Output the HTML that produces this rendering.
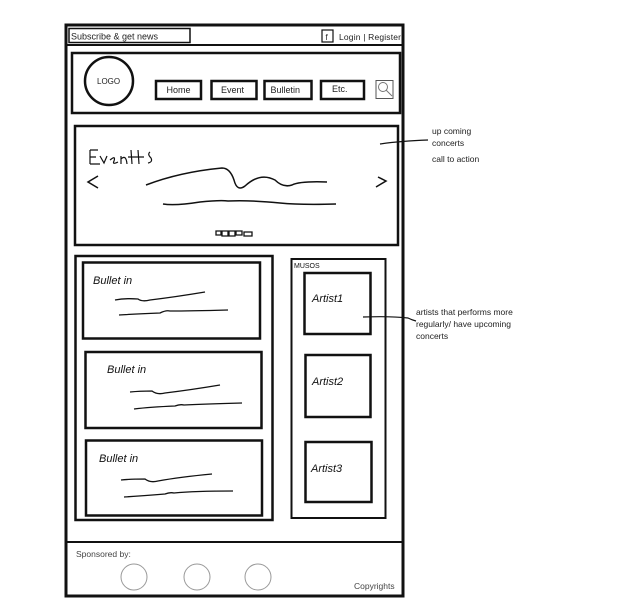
<!DOCTYPE html>
<html><head><style>
html,body{margin:0;padding:0;background:#fff;}
svg{display:block}
text{font-family:"Liberation Sans",sans-serif;}
</style></head><body>
<svg width="634" height="600" viewBox="0 0 634 600" xmlns="http://www.w3.org/2000/svg">
<g fill="none" stroke="#111">
<rect x="66" y="25" width="337" height="571" stroke-width="3"/>
<line x1="66" y1="45" x2="403" y2="45" stroke-width="2"/>
<rect x="69" y="28.5" width="121" height="14" stroke-width="1.5"/>
<rect x="322" y="30" width="11" height="12" stroke-width="1.2"/>
<rect x="72" y="53" width="328" height="60" stroke-width="2.5"/>
<circle cx="109" cy="81" r="24" stroke-width="2.5"/>
<rect x="156" y="81" width="45" height="18" stroke-width="2.5"/>
<rect x="211.5" y="81" width="45" height="18" stroke-width="2.5"/>
<rect x="264.5" y="81" width="47" height="18" stroke-width="2.5"/>
<rect x="321" y="81" width="43" height="18" stroke-width="2.5"/>
<rect x="376" y="80.5" width="17" height="18" stroke="#555" stroke-width="1"/>
<circle cx="383" cy="87" r="4.5" stroke="#777" stroke-width="1"/>
<line x1="386" y1="90" x2="392" y2="96" stroke="#777" stroke-width="1"/>
<rect x="75" y="126" width="323" height="119" stroke-width="2.5"/>
<path d="M90 150 V164 M90 150 H98 M90 157 H96 M90 164 H100 M100 156 L104 163 L107 156 M110 160 Q116 155 114 161 Q112 165 118 162 M121 156 V164 M121 159 Q126 154 127 164 M131 150 L132 164 M128 157 H136 M138 150 L139 164 M136 157 H144 M150 152 Q147 154 151 158 Q153 162 148 163" stroke-width="1.2"/>
<path d="M98 176 L88 182 L98 188 M378 177 L386 181 L376 187" stroke-width="1.5"/>
<path d="M146 185 Q180 172 222 168 Q230 168 234 180 Q237 192 245 186 Q260 172 275 180 Q283 188 292 185 Q300 181 327 182" stroke-width="1.5"/>
<path d="M163 204 Q175 206 200 202 Q220 200 228 201 Q250 200 280 203 Q300 205 336 204" stroke-width="1.5"/>
<path d="M216 231 h5 v4 h-5z M222 231 h6 v5 h-6z M229 231 h6 v5 h-6z M236 231 h6 v4 h-6z M244 232 h8 v4 h-8z" stroke-width="1.3"/>
<rect x="75.5" y="256" width="197" height="264" stroke-width="2.5"/>
<rect x="83" y="262.5" width="177" height="76" stroke-width="2.5"/>
<rect x="85.5" y="352" width="176" height="76" stroke-width="2.5"/>
<rect x="86" y="440.5" width="176" height="75" stroke-width="2.5"/>
<path d="M115 300 Q125 298 138 299 Q142 302 150 300 Q175 297 205 292 M119 315 Q135 314 160 313 Q166 310 170 311 Q190 311 228 310" stroke-width="1.3"/>
<path d="M130 392 Q140 391 152 391 Q157 395 165 393 Q190 390 220 385 M134 409 Q150 407 175 406 Q180 404 184 405 Q205 404 242 403" stroke-width="1.3"/>
<path d="M121 480 Q130 479 145 479 Q150 483 158 481 Q180 477 212 474 M124 497 Q140 496 165 494 Q170 492 174 493 Q195 491 233 491" stroke-width="1.3"/>
<rect x="291.5" y="259" width="94" height="259" stroke-width="2"/>
<rect x="304.5" y="273" width="66" height="61" stroke-width="2.5"/>
<rect x="305.5" y="355" width="65" height="62" stroke-width="2.5"/>
<rect x="305.5" y="442" width="66" height="60" stroke-width="2.5"/>
<line x1="66" y1="542" x2="403" y2="542" stroke-width="2"/>
<g stroke="#999" stroke-width="1"><circle cx="134" cy="577" r="13"/><circle cx="197" cy="577" r="13"/><circle cx="258" cy="577" r="13"/></g>
<path d="M380 144 Q400 141 428 140" stroke-width="1.2"/>
<path d="M363 317 Q390 316 408 318 Q412 320 416 321" stroke-width="1.2"/>
</g>
<g font-size="9" fill="#222">
<text x="71" y="39.5">Subscribe &amp; get news</text>
<text x="325.5" y="40" font-size="8">f</text>
<text x="339" y="40" font-size="8.5" textLength="62">Login | Register</text>
<text x="97" y="84" font-size="8">LOGO</text>
<text x="166.5" y="93">Home</text>
<text x="221" y="93">Event</text>
<text x="270.5" y="93">Bulletin</text>
<text x="332" y="92">Etc.</text>
<text x="76" y="557" fill="#444" font-size="8.5">Sponsored by:</text>
<text x="354" y="589" fill="#444" font-size="8.5">Copyrights</text>
<text x="432" y="134" font-size="8.5">up coming</text>
<text x="432" y="146" font-size="8.5">concerts</text>
<text x="432" y="162" font-size="8.5">call to action</text>
<text x="416" y="315" font-size="8.5">artists that performs more</text>
<text x="416" y="327" font-size="8.5">regularly/ have upcoming</text>
<text x="416" y="339" font-size="8.5">concerts</text>
</g>
<g fill="#111" font-size="11" style="font-style:italic">
<text x="93" y="284">Bullet in</text>
<text x="107" y="373">Bullet in</text>
<text x="99" y="462">Bullet in</text>
<text x="312" y="302">Artist1</text>
<text x="312" y="385">Artist2</text>
<text x="311" y="472">Artist3</text>
<text x="294" y="268" font-size="7" style="font-style:normal">MUSOS</text>
</g>
</svg>
</body></html>
